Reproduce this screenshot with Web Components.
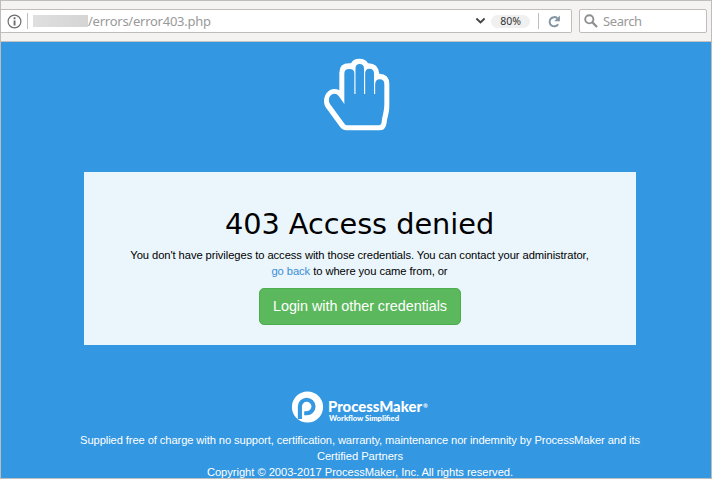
<!DOCTYPE html>
<html lang="en"><head><meta charset="utf-8"><title>403 Access denied</title>
<style>html,body{margin:0;height:100%;overflow:hidden}</style></head><body>
<app-window></app-window>
<script>
const define=(name,html)=>customElements.define(name,class extends HTMLElement{
 constructor(){super();const t=document.createElement('template');t.innerHTML=html;this.attachShadow({mode:'open'}).append(t.content.cloneNode(true));}
});
define('info-icon',`<style>:host{display:block;width:15px;height:15px}svg{display:block}</style>
<svg width="15" height="15" viewBox="0 0 15 15"><circle cx="7.5" cy="7.5" r="6.4" fill="none" stroke="#6d6d6d" stroke-width="1.2"/><path d="M6.6 3.3h1.9v1.9H6.6zM6.6 6.4h1.9v5H6.6z" fill="#6d6d6d"/></svg>`);
define('address-bar',`<style>:host{display:flex;align-items:center;box-sizing:border-box;width:571px;height:24px;background:#fff;border:1px solid #bfbcba;border-left:0;border-radius:0 2px 2px 0;padding-left:6px;font:13px/22px "Noto Sans",sans-serif}
.sep{width:1px;height:16px;background:#bdbdbd}.sep.a{margin:0 5px}.mask{width:55px;height:12px;background:linear-gradient(90deg,#dedfde,#d4d5d4)}
.url{color:#999;letter-spacing:-.25px;flex:1;white-space:nowrap}
.zoom{width:39px;height:13px;border-radius:7px;background:#f0f0f0;color:#333;font:10.5px/13px "Noto Sans",sans-serif;text-align:center;margin:0 8px 0 5px}
svg{display:block}.re{margin:0 10px 0 9px}</style>
<info-icon></info-icon><div class="sep a"></div><div class="mask"></div><div class="url">/errors/error403.php</div>
<svg width="11" height="8" viewBox="0 0 11 8"><path d="M1.4 1.5 5.5 5.4 9.6 1.5" fill="none" stroke="#444" stroke-width="1.9"/></svg>
<div class="zoom">80%</div><div class="sep"></div>
<svg class="re" width="13" height="13" viewBox="0 0 13 13"><path d="M10.1 9.2A4.6 4.6 0 1 1 9.3 3.3" fill="none" stroke="#8495a1" stroke-width="2"/><path d="M11.9.5v5.8H6.2z" fill="#8495a1"/></svg>`);
define('search-box',`<style>:host{display:flex;align-items:center;box-sizing:border-box;width:128px;height:24px;background:#fff;border:1px solid #bfbcba;border-radius:2px;padding-left:4px;gap:5px;font:13px/22px "Noto Sans",sans-serif;color:#999}span{letter-spacing:-.4px}</style>
<svg width="14" height="14" viewBox="0 0 14 14"><circle cx="5.3" cy="5.3" r="4.1" fill="none" stroke="#8e8e8e" stroke-width="1.9"/><path d="m8.3 8.3 4.7 4.7" stroke="#8e8e8e" stroke-width="2.3"/></svg><span>Search</span>`);
define('browser-toolbar',`<style>:host{display:flex;gap:7px;box-sizing:border-box;height:41px;padding-top:8px;background:#f5f3f2;border-bottom:1px solid #c4c1bf}</style><address-bar></address-bar><search-box></search-box>`);
define('hand-icon',`<style>:host{display:block;width:66px;height:73px}svg{display:block}</style>
<svg width="66" height="73" viewBox="42 24 198 219">
<path fill="#fff" d="M88 121V68Q88 40 117 40H123Q128 26 148 26Q168 26 174 40Q204 39 208 71Q238 72 238 102V165C238 190 232 200 230 218Q227 241 208 241H110Q98 241 91 232L47 172C34 150 48 117 73 117Q82 117 88 121Z"/>
<path fill="#3397e2" d="M103 162V70Q103 57 118 57Q133 57 133 70V132H136.500V56Q136.500 42 149 42Q162 42 162 56V132H165.500V70Q165.500 56 178 56Q192 56 192 70V132H195.500V102Q196 88 209 88Q223 88 223 103V160C223 185 217 197 215 216Q214 226 206 226H111Q107 226 104 222L60 162C52 147 60 131 73 131Q81 131 86 138Z"/></svg>`);
define('link-text',`<style>:host{color:#3c8dd4}</style><slot></slot>`);
define('action-button',`<style>:host{display:block;box-sizing:border-box;width:202px;height:37px;border:1px solid #4cae4c;border-radius:5px;background:#5cb85c;color:#fff;font:14.4px/35px "Liberation Sans",sans-serif;letter-spacing:-.04px;text-align:center;white-space:nowrap}</style><slot></slot>`);
define('error-card',`<style>:host{display:flex;flex-direction:column;align-items:center;box-sizing:border-box;width:552px;height:173px;background:#eaf5fc;color:#000;padding-top:33px;font:11.2px/16px "Liberation Sans",sans-serif;text-align:center}
h1{margin:0 1px 0 0;font:28.8px/38px "DejaVu Sans",sans-serif;letter-spacing:-.05px;white-space:nowrap}p{margin:4px 1px 9px 0;white-space:nowrap;letter-spacing:-.07px}</style>
<h1>403 Access denied</h1><p><span>You don't have privileges to access with those credentials. You can contact your administrator,</span><br><span><link-text>go back</link-text> to where you came from, or</span></p><action-button>Login with other credentials</action-button>`);
define('brand-logo',`<style>:host{display:block;width:138px;height:32px}svg{display:block}text{font-family:Lato,sans-serif;fill:#fff}</style>
<svg width="138" height="32" viewBox="0 0 138 32"><circle cx="16.5" cy="16" r="15.6" fill="#fff"/><path d="M8.900 28V15.500A6.800 6.800 0 1 1 15.700 22.300H13.200" fill="none" stroke="#3397e2" stroke-width="4.100"/>
<text x="37" y="20.500" font-size="14.500" font-weight="900" textLength="94" lengthAdjust="spacingAndGlyphs">ProcessMaker</text><text x="132" y="16.500" font-size="6" font-weight="700">®</text><text x="38" y="30" font-size="7.500" font-weight="900" textLength="70" lengthAdjust="spacingAndGlyphs">Workflow Simplified</text></svg>`);
define('legal-note',`<style>:host{display:block;color:#fff;font:11.2px/16px "Liberation Sans",sans-serif;text-align:center;white-space:nowrap}.a{letter-spacing:-.105px}.c{letter-spacing:-.05px}</style>
<span class="a">Supplied free of charge with no support, certification, warranty, maintenance nor indemnity by ProcessMaker and its</span><br><span class="c">Certified Partners</span><br><span class="c">Copyright © 2003-2017 ProcessMaker, Inc. All rights reserved.</span>`);
define('error-page',`<style>:host{display:flex;flex:1;min-height:0;flex-direction:column;align-items:center;background:#3397e2;padding-top:16px;padding-left:8px;overflow:hidden}
hand-icon{margin-right:6px;flex:none}error-card{margin-top:41px;flex:none}brand-logo{margin-top:46px;flex:none}legal-note{margin-top:9px;flex:none}</style>
<hand-icon></hand-icon><error-card></error-card><brand-logo></brand-logo><legal-note></legal-note>`);
define('app-window',`<style>:host{display:flex;flex-direction:column;box-sizing:border-box;width:712px;height:479px;border:1px solid #bdbdbd;overflow:hidden}browser-toolbar{flex:none}</style><browser-toolbar></browser-toolbar><error-page></error-page>`);
</script></body></html>
